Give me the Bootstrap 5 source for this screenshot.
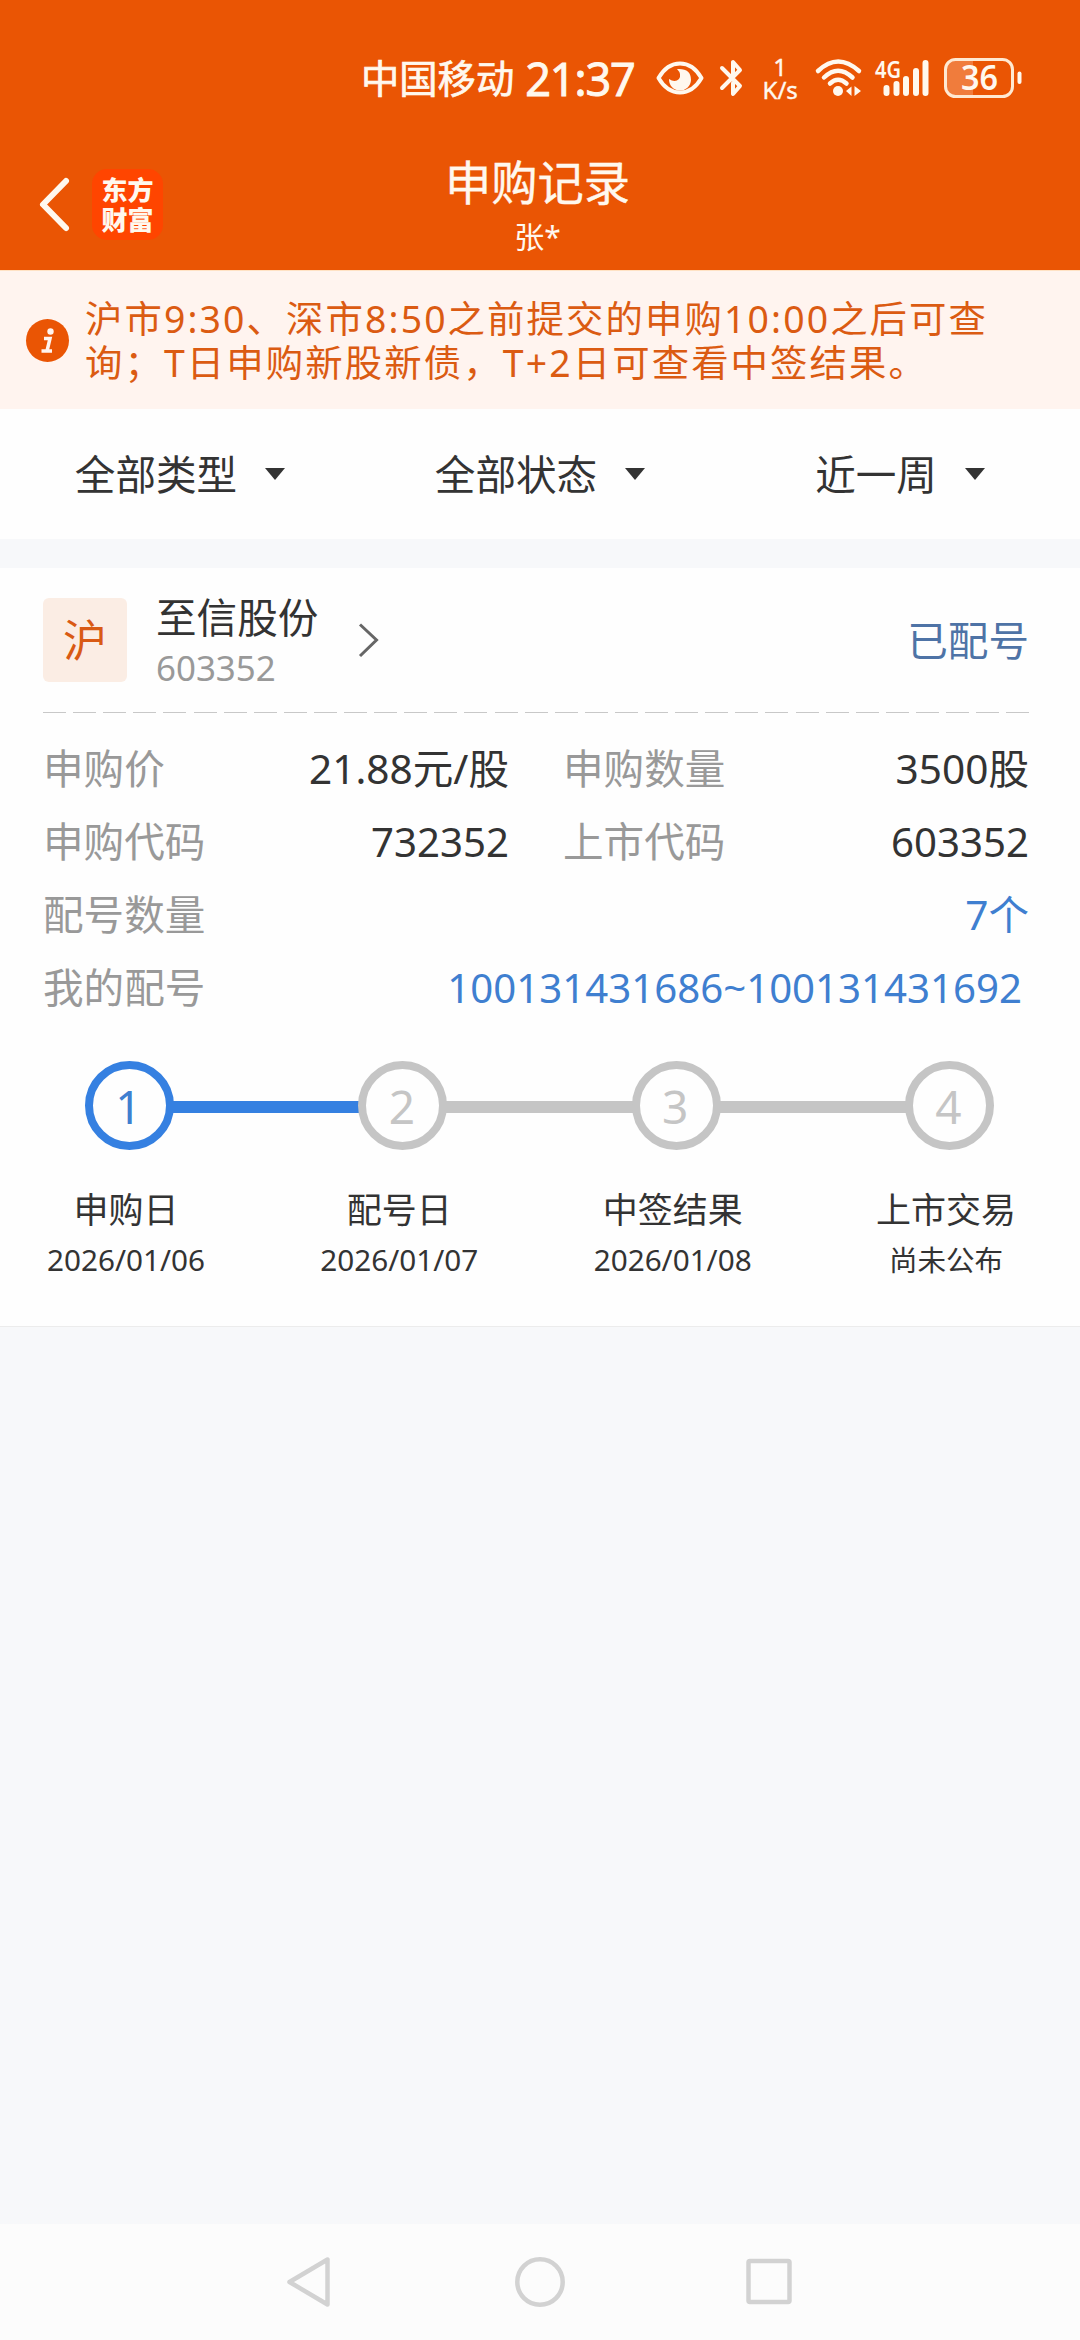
<!DOCTYPE html>
<html lang="zh-CN">
<head>
<meta charset="utf-8">
<meta name="viewport" content="width=device-width, initial-scale=1">
<title>申购记录</title>
<link href="https://cdn.jsdelivr.net/npm/bootstrap@5.3.0/dist/css/bootstrap.min.css" rel="stylesheet">
<style>
body{font-family:"Noto Sans","Noto Sans CJK SC",sans-serif;font-size:40.6px;line-height:1;color:#333;background:#f7f8fa;width:1080px;height:2340px;overflow:hidden}
svg{display:block;flex:none;overflow:visible}
.tx{display:block;white-space:nowrap}
.top-area{background:#ea5504;color:#fff8ee;height:270px}
.status{height:156px;padding-left:361px}
.carrier{font-size:38.3px;-webkit-text-stroke:.7px}
.clock{font-size:45px;letter-spacing:-1.1px;-webkit-text-stroke:.9px;margin-left:11px;width:131px}
.speed{font-size:24px;line-height:23px;width:40px;margin-left:17px;-webkit-text-stroke:.4px}
.title-bar{height:114px;padding:0 41px 0 38px}
.side{width:200px;height:96px}
.logo{width:71px;height:71px;border-radius:15px;background:#ff4500;font-size:26px;line-height:30px;font-weight:900;margin-left:21px;font-family:"Noto Sans CJK SC",sans-serif}
.page-title{font-size:46.3px;line-height:54px;margin-left:-2px;-webkit-text-stroke:.4px}
.page-sub{font-size:30px;line-height:36px;margin-top:9px;margin-left:-2px}
.notice{height:139px;background:#fff4ef;color:#db5b12;border-top:1px solid #ffe2c4;padding-left:26px}
.notice-text{font-size:37.4px;line-height:44px;letter-spacing:2.1px;margin-left:16px;padding-top:2px}
.filters{height:130px;background:#fefefe}
.filters .tx{margin-right:28px;padding-top:3px}
.record{background:#fefefe;margin-top:29px;height:759px;border-bottom:1px solid #ececec;padding:0 51px 0 43px}
.stock{height:144px}
.market{width:84px;height:84px;border-radius:6px;background:#fbede4;color:#d95a14;font-size:44px}
.stock-name{margin-left:29px;padding-top:4px}
.code{font-size:34.9px;color:#999;margin-top:12px}
.state{color:#4e73a6;padding-top:3px}
.dash{height:1px;width:987px;background:repeating-linear-gradient(90deg,#c8c8c8 0 23px,transparent 23px 30.1px)}
.info{padding-top:19px}
.info .line{height:73px}
.info .tx{padding-top:1px}
.lab{color:#999}
.num{font-size:40.2px}
.half{width:466px}
.blue{color:#3f7fd0}
.steps{margin:37px -1px 0 42px;padding-right:36px}
.dot{width:89px;height:89px;border:8.5px solid #c5c5c5;border-radius:50%;color:#c5c5c5;font-size:46px;flex:none}
.dot .tx{margin-left:-2px}
.bar{height:12px;background:#c5c5c5;margin:2px -2px 0}
.dot.on{border-color:#3580e1;color:#3f7fd0}
.bar.on{background:#3580e1}
.captions{margin-top:38px}
.cap{width:166px}
.cap-a{font-size:35px;line-height:44px}
.cap-b{font-size:29.7px;line-height:40px;margin-top:8px}
.sysnav{height:116px;background:#fcfcfc;padding:0 285px}
</style>
</head>
<body class="d-flex flex-column">
<header class="top-area">
  <div class="status d-flex align-items-center">
    <span class="tx carrier">中国移动</span>
    <span class="tx clock">21:37</span>
    <svg width="48" height="34" viewBox="0 0 48 34" fill="none" stroke="#fff8ee"><path d="M2.5 17Q11 2.5 24 2.5T45.5 17Q37 31.500 24 31.500T2.500 17Z" stroke-width="4" stroke-linejoin="round"/><path d="M21 8Q35 7 35 19A11 11 0 0 1 13 18Q19 22 23 18Q26 13 21 8Z" fill="#fff8ee" stroke="none"/></svg>
    <svg class="ms-3" width="23" height="38" viewBox="0 0 23 38" fill="none" stroke="#fff8ee" stroke-width="4" stroke-linecap="round" stroke-linejoin="round"><path d="M2 9L20 27L13 35V24M2 29L20 11L13 3V15"/></svg>
    <div class="speed text-center"><span class="tx">1</span><span class="tx">K/s</span></div>
    <svg style="margin-left:15px" width="50" height="38" viewBox="0 0 50 38" fill="none" stroke="#fff8ee" stroke-width="4.500" stroke-linecap="round"><path d="M3 12Q23-7 44 12M9 18.500Q23 5 37.500 18.500M15 24.500Q23 17 31.500 24.500"/><circle cx="23" cy="32" r="5" fill="#fff8ee" stroke="none"/><path d="M31 32L36.500 27.500V37ZM46 32L39.500 27V37Z" fill="#fff8ee" stroke="none"/></svg>
    <svg style="margin-left:10px" width="56" height="38" viewBox="0 0 56 38"><text x="0" y="19" font-size="23" font-weight="600" textLength="26" lengthAdjust="spacingAndGlyphs" fill="#fff8ee">4G</text><path d="M11.500 29V34M21.500 25V34M31 20V34M41 12V34M50.500 4V34" stroke="#fff8ee" stroke-width="6" stroke-linecap="round"/></svg>
    <svg style="margin-left:12px" width="80" height="42" viewBox="0 0 80 42"><path d="M30 3H12Q3 3 3 12V30Q3 39 12 39H30Z" fill="#f07c3c"/><rect x="2.500" y="2.500" width="67" height="37" rx="10" fill="none" stroke="#ffe9d2" stroke-width="3"/><path d="M76.500 16.500V25" stroke="#fff8ee" stroke-width="4" stroke-linecap="round"/><text x="18" y="33" font-size="34" font-weight="600" textLength="37" lengthAdjust="spacingAndGlyphs" fill="#fff8ee">36</text></svg>
  </div>
  <div class="title-bar d-flex justify-content-between align-items-start">
    <div class="side d-flex align-items-center">
      <svg width="33" height="56" viewBox="0 0 33 56" fill="none" stroke="#fff8ee" stroke-width="6" stroke-linecap="round" stroke-linejoin="round"><path d="M28 5L5 28.500L28 52"/></svg>
      <div class="logo d-flex flex-column align-items-center justify-content-center"><span class="tx">东方</span><span class="tx">财富</span></div>
    </div>
    <div class="text-center"><span class="tx page-title">申购记录</span><span class="tx page-sub">张*</span></div>
    <div class="side"></div>
  </div>
</header>

<section class="notice d-flex align-items-center">
  <svg width="43" height="43" viewBox="0 0 43 43"><circle cx="21.500" cy="21.500" r="21.500" fill="#ea5504"/><circle cx="24.500" cy="12.500" r="3.200" fill="#fff4ef"/><path d="M18 19.500H24L21 32M15.500 32H26" fill="none" stroke="#fff4ef" stroke-width="3.500"/></svg>
  <div class="notice-text"><span class="tx">沪市9:30、深市8:50之前提交的申购10:00之后可查</span><span class="tx">询；T日申购新股新债，T+2日可查看中签结果。</span></div>
</section>

<nav class="filters row g-0 align-items-center">
  <div class="col-4 d-flex justify-content-center align-items-center"><span class="tx">全部类型</span><svg width="20" height="12"><path d="M0 0H20L10 12Z" fill="#333"/></svg></div>
  <div class="col-4 d-flex justify-content-center align-items-center"><span class="tx">全部状态</span><svg width="20" height="12"><path d="M0 0H20L10 12Z" fill="#333"/></svg></div>
  <div class="col-4 d-flex justify-content-center align-items-center"><span class="tx">近一周</span><svg width="20" height="12"><path d="M0 0H20L10 12Z" fill="#333"/></svg></div>
</nav>

<main class="record">
  <div class="stock d-flex align-items-center">
    <div class="market d-flex align-items-center justify-content-center"><span class="tx">沪</span></div>
    <div class="stock-name"><span class="tx">至信股份</span><span class="tx code">603352</span></div>
    <svg style="margin-left:40px" width="22" height="36" viewBox="0 0 22 36" fill="none" stroke="#666" stroke-width="3"><path d="M2 2.500L18.500 18L2 34"/></svg>
    <span class="tx ms-auto state">已配号</span>
  </div>
  <div class="dash"></div>
  <div class="info">
    <div class="line d-flex justify-content-between align-items-center">
      <div class="half d-flex justify-content-between"><span class="tx lab">申购价</span><span class="tx">21.88元/股</span></div>
      <div class="half d-flex justify-content-between"><span class="tx lab">申购数量</span><span class="tx">3500股</span></div>
    </div>
    <div class="line d-flex justify-content-between align-items-center">
      <div class="half d-flex justify-content-between"><span class="tx lab">申购代码</span><span class="tx num">732352</span></div>
      <div class="half d-flex justify-content-between"><span class="tx lab">上市代码</span><span class="tx num">603352</span></div>
    </div>
    <div class="line d-flex justify-content-between align-items-center"><span class="tx lab">配号数量</span><span class="tx blue">7个</span></div>
    <div class="line d-flex justify-content-between align-items-center"><span class="tx lab">我的配号</span><span class="tx blue num" style="margin-right:7px">100131431686~100131431692</span></div>
  </div>
  <div class="steps d-flex align-items-center">
    <div class="dot on d-flex align-items-center justify-content-center"><span class="tx">1</span></div>
    <div class="bar on flex-fill"></div>
    <div class="dot d-flex align-items-center justify-content-center"><span class="tx">2</span></div>
    <div class="bar flex-fill"></div>
    <div class="dot d-flex align-items-center justify-content-center"><span class="tx">3</span></div>
    <div class="bar flex-fill"></div>
    <div class="dot d-flex align-items-center justify-content-center"><span class="tx">4</span></div>
  </div>
  <div class="captions d-flex justify-content-between text-center">
    <div class="cap"><span class="tx cap-a">申购日</span><span class="tx cap-b">2026/01/06</span></div>
    <div class="cap"><span class="tx cap-a">配号日</span><span class="tx cap-b">2026/01/07</span></div>
    <div class="cap"><span class="tx cap-a">中签结果</span><span class="tx cap-b">2026/01/08</span></div>
    <div class="cap"><span class="tx cap-a">上市交易</span><span class="tx cap-b" style="font-size:28.5px">尚未公布</span></div>
  </div>
</main>

<footer class="sysnav mt-auto d-flex justify-content-between align-items-center">
  <svg width="50" height="54" viewBox="0 0 50 54" fill="none" stroke="#d2d2d2" stroke-width="4.500" stroke-linejoin="round"><path d="M4.500 27L42.500 4.500V49.500Z"/></svg>
  <svg width="54" height="54" viewBox="0 0 54 54" fill="none" stroke="#d2d2d2" stroke-width="4.500"><circle cx="27" cy="27" r="22.700"/></svg>
  <svg width="50" height="54" viewBox="0 0 50 54" fill="none" stroke="#d2d2d2" stroke-width="4.500" stroke-linejoin="round"><rect x="3.500" y="6" width="41" height="41" rx="1.500"/></svg>
</footer>
<script src="https://cdn.jsdelivr.net/npm/bootstrap@5.3.0/dist/js/bootstrap.bundle.min.js"></script>
</body>
</html>
